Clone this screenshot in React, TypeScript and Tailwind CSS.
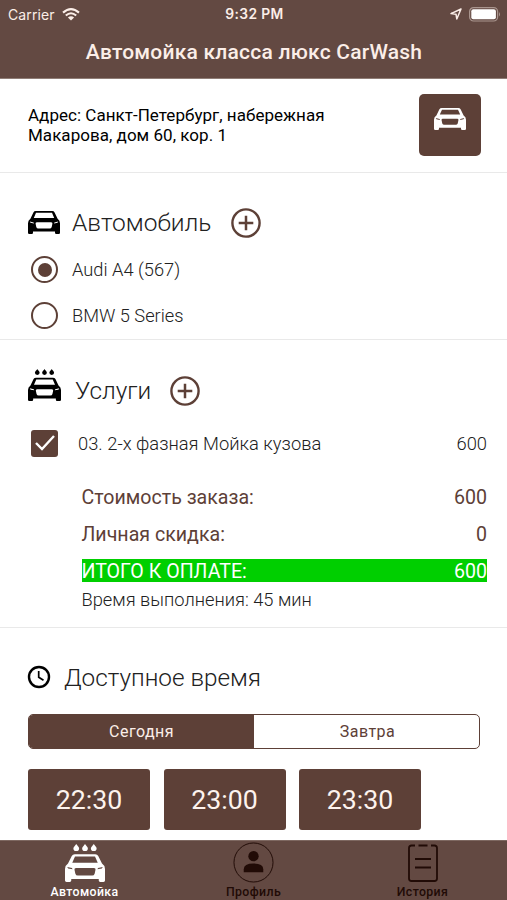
import { useState } from 'react';

const services = [{ name: '03. 2-х фазная Мойка кузова', price: 600 }];

const cars = ['Audi A4 (567)', 'BMW 5 Series'];

const slots = ['22:30', '23:00', '23:30'];

const CAR_PATH =
  'M7.8 0H24.2Q25.9 0 26.6 1.4L29.6 7.6Q32 9.2 32 12V21.4Q32 22.6 30.8 22.6H28.2Q27 22.6 27 21.4V20.2H5V21.4Q5 22.6 3.8 22.6H1.2Q0 22.6 0 21.4V12Q0 9.2 2.4 7.6L5.4 1.4Q6.1 0 7.8 0ZM8 1.8L5.8 6.8H26.2L24 1.8ZM8.8 11.1Q7.3 11.1 7.6 12.6L8.3 15.8Q8.7 17.3 10.3 17.3H21.7Q23.3 17.3 23.7 15.8L24.4 12.6Q24.7 11.1 23.2 11.1ZM1.8 10.3L2.5 11.6L6 12.2L5.6 11.2ZM30.2 10.3L29.5 11.6L26 12.2L26.4 11.2Z';

const DROPS = [9, 16, 23];

function CarIcon({ className = '' }: { className?: string }) {
  return (
    <svg viewBox="0 0 32 22.6" preserveAspectRatio="none" fill="currentColor" className={className}>
      <path fillRule="evenodd" d={CAR_PATH} />
    </svg>
  );
}

function CarWashIcon({ className = '' }: { className?: string }) {
  return (
    <svg viewBox="0 0 32 31" preserveAspectRatio="none" fill="currentColor" className={className}>
      {DROPS.map((x) => (
        <path key={x} d="M0 0C.6 1.2 2.3 2.3 2.3 3.7A2.2 2 0 0 1-2.3 3.7C-2.3 2.3-.6 1.2 0 0Z" transform={`translate(${x} 0)`} />
      ))}
      <path fillRule="evenodd" transform="translate(0 8.4)" d={CAR_PATH} />
    </svg>
  );
}

function PlusButton() {
  return (
    <button className="text-[#5d4037]">
      <svg viewBox="0 0 30 30" fill="none" stroke="currentColor" strokeWidth="2.4" className="block size-[30px]">
        <circle cx="15" cy="15" r="13.6" />
        <path d="M15 7.7V22.3M7.7 15H22.3" strokeWidth="2.5" />
      </svg>
    </button>
  );
}

function StatusBar() {
  return (
    <div className="grid h-7 grid-cols-3 items-center pr-[6px] pl-2 text-[#fbeee8]">
      <div className="flex items-center gap-[7px]">
        <span className="text-[14px] tracking-[0.1px]">Carrier</span>
        <svg viewBox="0 0 18 13" fill="none" stroke="currentColor" className="h-[13px] w-[18px]">
          <path d="M1 4.6Q9-2.4 17 4.6" strokeWidth="2.1" />
          <path d="M3.8 7.5Q9 3 14.2 7.5" strokeWidth="2.1" />
          <path d="M9 12.4L5.9 9.4Q9 7.1 12.1 9.4Z" fill="currentColor" stroke="none" />
        </svg>
      </div>
      <span className="text-center text-[13.8px] font-semibold tracking-[0.4px] whitespace-nowrap">9:32 PM</span>
      <div className="flex items-center justify-end gap-[7px]">
        <svg viewBox="0 0 12 12" fill="none" stroke="currentColor" strokeWidth="1.5" strokeLinejoin="round" className="size-3">
          <path d="M11 1L1 5.6L6 6.2L6.8 11Z" />
        </svg>
        <svg viewBox="0 0 32 15" className="h-[15px] w-8">
          <rect x=".6" y=".6" width="28" height="13.4" rx="4" fill="none" stroke="#a9958e" strokeWidth="1.2" />
          <rect x="2.3" y="2.3" width="24.6" height="10" rx="2" fill="#fff" />
          <path d="M30 5Q32 7.3 30 9.6Z" fill="#a9958e" />
        </svg>
      </div>
    </div>
  );
}

function Radio({ checked }: { checked: boolean }) {
  return (
    <span className="flex size-[27px] items-center justify-center rounded-full border-2 border-[#5d4037]">
      {checked && <span className="size-[14px] rounded-full bg-[#5d4037]" />}
    </span>
  );
}

export default function App() {
  const [car, setCar] = useState(0);

  return (
    <div className="flex h-[900px] w-[507px] flex-col overflow-hidden bg-white font-['Roboto',sans-serif] text-[#212121]">
      {/* Header */}
      <header className="h-[79px] shrink-0 border-b border-[#8f7d76] bg-[#634942] font-['Inter',sans-serif]">
        <StatusBar />
        <h1 className="pt-[9px] pl-px text-center font-['Roboto',sans-serif] text-[21px] leading-[30px] font-medium tracking-[0.22px] text-[#fbeee8]">
          Автомойка класса люкс CarWash
        </h1>
      </header>

      {/* Address */}
      <section className="flex h-[94px] shrink-0 justify-between border-b border-[#e9e9e9] pr-[26.5px] pl-7">
        <p className="pt-[25.5px] text-[17px] leading-5 tracking-[0.03px] text-black">
          Адрес: Санкт-Петербург, набережная
          <br />
          Макарова, дом 60, кор. 1
        </p>
        <button className="mt-[15px] flex h-[62px] w-[62px] justify-center rounded-[5px] bg-[#5d4037] pt-[14px] text-white">
          <CarIcon className="h-[22px] w-8" />
        </button>
      </section>

      {/* Car */}
      <section className="h-[167px] shrink-0 border-b border-[#e9e9e9] pt-[35px] pl-7">
        <div className="flex h-[30px] items-center">
          <CarIcon className="mb-[2px] h-[23px] w-8 text-black" />
          <h2 className="mt-px mr-5 ml-3 w-[139px] text-[24.5px] font-light">Автомобиль</h2>
          <PlusButton />
        </div>
        <div className="flex flex-col gap-[19px] pt-[18px] pl-[3px]">
          {cars.map((name, index) => (
            <button key={name} onClick={() => setCar(index)} className="flex items-center gap-[14px] text-[18.25px] leading-[27px] font-light">
              <Radio checked={car === index} />
              {name}
            </button>
          ))}
        </div>
      </section>

      {/* Services */}
      <section className="h-[288px] shrink-0 border-b border-[#e9e9e9] pt-[28px] pr-5 pl-7">
        <div className="flex h-[45px] items-center">
          <CarWashIcon className="mb-[12px] h-[32px] w-[33px] text-black" />
          <h2 className="mt-[2px] mr-5 ml-[14px] w-[75px] text-[24.3px] font-light">Услуги</h2>
          <PlusButton />
        </div>
        {services.map((service) => (
          <div key={service.name} className="mt-4 flex h-7 items-center pl-[3px] text-[18.35px] font-light">
            <span className="mr-5 flex size-[27px] items-center justify-center rounded-[3px] bg-[#5d4037]">
              <svg viewBox="0 0 20 16" fill="none" stroke="#fff" strokeWidth="2.4" className="h-4 w-5">
                <path d="M1 8L7 14L19 1" />
              </svg>
            </span>
            <span className="pt-px">{service.name}</span>
            <span className="ml-auto pt-px">{service.price}</span>
          </div>
        ))}
        <div className="mt-[29px] ml-[53.5px] text-[19.6px] leading-6 text-[#5d4037]">
          <div className="flex justify-between">
            <span>Стоимость заказа:</span>
            <span>600</span>
          </div>
          <div className="mt-[13px] flex justify-between">
            <span>Личная скидка:</span>
            <span>0</span>
          </div>
          <div className="mt-[12px] flex h-[23px] justify-between bg-[#00cf00] leading-[25px] text-white">
            <span>ИТОГО К ОПЛАТЕ:</span>
            <span>600</span>
          </div>
          <p className="mt-[6px] text-[18.3px] font-light text-[#212121]">Время выполнения: 45 мин</p>
        </div>
      </section>

      {/* Time slots */}
      <section className="h-[212px] shrink-0 pt-[34px] pr-[27px] pl-7">
        <div className="flex h-8 items-center">
          <svg viewBox="0 0 24 24" fill="none" stroke="#000" strokeWidth="2.4" className="-ml-px mb-[2px] size-6">
            <circle cx="12" cy="12" r="10" />
            <path d="M11.7 6V12.3L16.5 15.3" strokeWidth="1.7" />
          </svg>
          <h2 className="ml-[13px] text-[24.3px] font-light">Доступное время</h2>
        </div>
        <div className="mt-5 flex h-[35px] overflow-hidden rounded-[5px] border border-[#5d4037] text-[16px] tracking-[0.45px] text-[#5d4037]">
          <button className="w-1/2 bg-[#5d4037] pt-px text-[#fbeee8]">Сегодня</button>
          <button className="w-1/2 pt-px pl-[2px]">Завтра</button>
        </div>
        <div className="mt-5 flex gap-[13.5px]">
          {slots.map((slot) => (
            <button key={slot} className="h-[61px] w-[122px] rounded-[3px] bg-[#5d4037] pt-px text-[26.7px] text-[#fdf3ee]">
              {slot}
            </button>
          ))}
        </div>
      </section>

      {/* Tab bar */}
      <nav className="grid h-[60px] shrink-0 grid-cols-3 border-t border-[#7e6861] bg-[#634942] text-[12.3px] font-medium tracking-[0.4px] text-[#210b06]">
        <button className="flex flex-col items-center text-white">
          <CarWashIcon className="mt-[3px] h-[38px] w-10" />
          <span className="mt-[2px] leading-4">Автомойка</span>
        </button>
        <button className="flex flex-col items-center">
          <svg viewBox="0 0 42 42" className="mt-[1px] h-[41px] w-[41px]">
            <circle cx="21" cy="21" r="20" fill="none" stroke="currentColor" strokeWidth="1" />
            <circle cx="21" cy="14.5" r="5.3" fill="currentColor" />
            <path d="M11 31V28Q11 22 21 22Q31 22 31 28V31Z" fill="currentColor" />
          </svg>
          <span className="mt-[1px] leading-4">Профиль</span>
        </button>
        <button className="flex flex-col items-center">
          <svg viewBox="0 0 30 38" fill="none" stroke="currentColor" strokeWidth="1.8" strokeLinejoin="round" className="mt-[3px] h-[38px] w-[30px]">
            <path d="M7 1.5H3.5Q1 1.5 1 4V34.5Q1 37 3.5 37H26.5Q29 37 29 34.5V4Q29 1.5 26.5 1.5H23M10.5 1.5H19.5M7 15H23M7 23.5H23" />
          </svg>
          <span className="mt-[2px] leading-4">История</span>
        </button>
      </nav>
    </div>
  );
}
